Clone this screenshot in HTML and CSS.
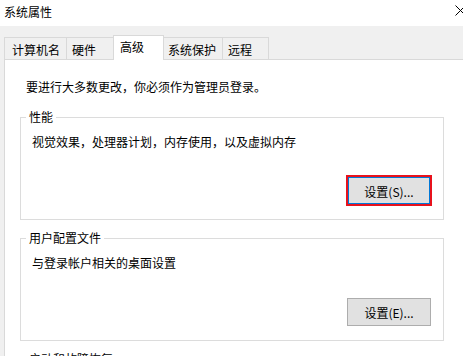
FILE: index.html
```html
<!DOCTYPE html>
<html lang="zh-CN">
<head>
    <meta charset="UTF-8">
    <meta name="viewport" content="width=device-width, initial-scale=1.0">
    <title>系统属性</title>
    <link rel="stylesheet" href="styles.css">
</head>
<body>
    <div class="window">
        <div class="titlebar">
            <span class="title">系统属性</span>
            <svg class="close" width="11" height="11" viewBox="0 0 11 11">
                <path d="M0.5 0.5 L10.5 10.5 M10.5 0.5 L0.5 10.5" stroke="#000" stroke-width="1" fill="none"/>
            </svg>
        </div>

        <div class="tabs">
            <div class="tab">计算机名</div>
            <div class="tab">硬件</div>
            <div class="tab active">高级</div>
            <div class="tab">系统保护</div>
            <div class="tab">远程</div>
        </div>

        <div class="panel">
            <p class="note">要进行大多数更改，你必须作为管理员登录。</p>

            <fieldset class="group">
                <legend>性能</legend>
                <p class="desc">视觉效果，处理器计划，内存使用，以及虚拟内存</p>
                <div class="actions">
                    <button class="btn focus">设置(S)...</button>
                </div>
            </fieldset>

            <fieldset class="group">
                <legend>用户配置文件</legend>
                <p class="desc">与登录帐户相关的桌面设置</p>
                <div class="actions">
                    <button class="btn">设置(E)...</button>
                </div>
            </fieldset>

            <fieldset class="group">
                <legend>启动和故障恢复</legend>
            </fieldset>
        </div>
    </div>
</body>
</html>
```

FILE: styles.css
```css
* {
    box-sizing: border-box;
}

body {
    margin: 0;
    overflow: hidden;
    background-color: #f0f0f0;
    font-family: "Noto Sans CJK SC", "Noto Sans", sans-serif;
    font-size: 12px;
    line-height: 16px;
    color: #000;
}

.titlebar {
    display: flex;
    justify-content: space-between;
    align-items: center;
    height: 26px;
    padding-left: 4px;
    background-color: #fff;
}

.title {
    margin-top: -2px;
}

.close {
    margin-right: -3px;
    margin-top: -5px;
}

/* onglets */
.tabs {
    display: flex;
    align-items: flex-end;
    height: 33px;
    padding: 9px 0 0 4px;
}

.tab {
    height: 22px;
    padding: 4px 0 0 6px;
    border: 1px solid #d9d9d9;
    border-bottom: none;
    margin-left: -1px;
    white-space: nowrap;
}

.tab:first-child {
    margin-left: 0;
    width: 63px;
    padding-left: 7px;
}

.tab:nth-child(2) { width: 48px; padding-left: 5px; }
.tab:nth-child(4) { width: 60px; padding-left: 4px; }
.tab:nth-child(5) { width: 47px; padding-left: 5px; }

.tab.active {
    position: relative;
    z-index: 1;
    width: 51px;
    height: 25px;
    padding-top: 3px;
    margin-bottom: -1px;
    background-color: #fff;
}

.panel {
    width: 520px;
    height: 400px;
    margin-left: 4px;
    padding: 19px 0 0 15px;
    background-color: #fff;
    border: 1px solid #d9d9d9;
}

.note {
    margin: 0 0 14px 6px;
}

.group {
    width: 424px;
    margin: 0 0 10px 0;
    padding: 0 12px 0 0;
    min-width: 0;
    min-height: 40px;
    border: 1px solid #dcdcdc;
}

.group legend {
    margin-left: 5px;
    padding: 0 3px;
}

.desc {
    margin: 9px 0 0 11px;
}

.actions {
    display: flex;
    justify-content: flex-end;
}

.btn {
    width: 84px;
    height: 28px;
    margin: 27px 0 14px 0;
    padding: 2px 0 0 0;
    font-family: inherit;
    font-size: 12px;
    line-height: 16px;
    color: #000;
    background-color: #e1e1e1;
    border: 1px solid #adadad;
}

.btn.focus {
    width: 86px;
    height: 31px;
    margin: 25px -1px 13px 0;
    border: 2px solid #e8121c;
    box-shadow: inset 0 0 0 1px #0078d7;
}
```
